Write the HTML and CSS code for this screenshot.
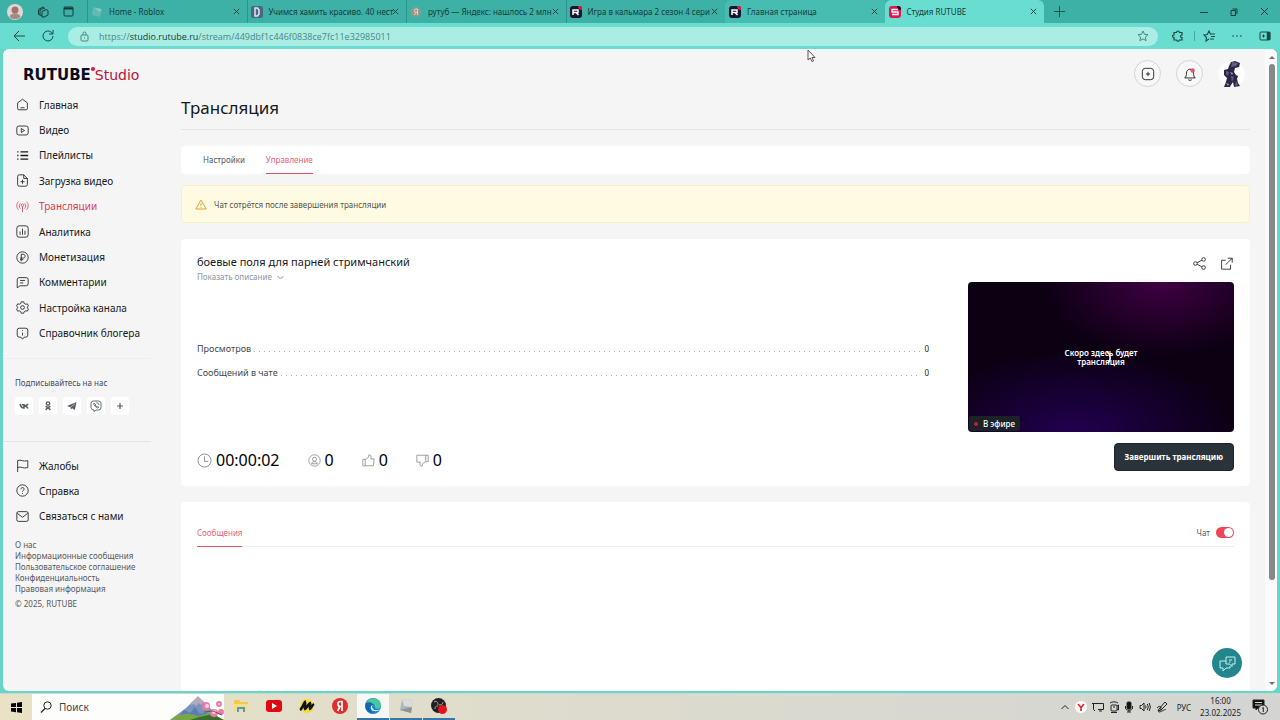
FILE: index.html
```html
<!DOCTYPE html>
<html lang="ru">
<head>
<meta charset="utf-8">
<title>Студия RUTUBE</title>
<link rel="stylesheet" href="styles.css">
</head>
<body>
<svg class="defs" aria-hidden="true">
  <symbol id="close" viewBox="0 0 10 10"><path d="M2 2l6 6M8 2L2 8"/></symbol>
  <symbol id="rutube" viewBox="0 0 12 12"><rect width="12" height="12" rx="3" fill="#141433" stroke="none"/><path d="M8 0h1a3 3 0 0 1 3 3v1A4 4 0 0 1 8 0z" fill="#ed143b" stroke="none"/><path d="M3 9V4h5v2.500H3M6.500 7L8.500 9" stroke="#fff" stroke-width="1.500" fill="none"/></symbol>
</svg>

<header class="tabstrip">
  <div class="tabstrip-tools">
    <button class="plain" aria-label="Профиль"><svg width="16" height="16" viewBox="0 0 16 16"><circle cx="8" cy="8" r="8" fill="#dcd9d4" stroke="none"/><circle cx="8" cy="6" r="3.500" fill="#a3746c" stroke="none"/><path d="M2.500 13c1-5 10-5 11 0a8 8 0 0 1-11 0z" fill="#a98a82" stroke="none"/></svg></button>
    <button class="plain" aria-label="Рабочие области"><svg width="12" height="12" viewBox="0 0 12 12"><path d="M3 9L1.500 8.500v-5L6 1l1 .500M5 10L3 9V4l4-2 1 .500M5 11V5.500l4-2 2 1V9l-4 2z"/></svg></button>
    <button class="plain" aria-label="Меню вкладок"><svg width="11" height="11" viewBox="0 0 11 11"><rect x="1" y="1" width="9" height="9" rx="1"/><path d="M1 2.500h9" stroke-width="2"/></svg></button>
  </div>
  <nav class="tabs" aria-label="Вкладки">
    <div class="tab"><svg width="12" height="12" viewBox="0 0 12 12"><path d="M2 1l9 2-2 8-8-2z" fill="#64b9b2" stroke="none"/><path d="M4 2l6 1-1 3z" fill="#91cec6" stroke="none"/></svg><span>Home - Roblox</span><button class="plain" aria-label="Закрыть"><svg width="9" height="9"><use href="#close"/></svg></button></div>
    <div class="tab"><svg width="12" height="12" viewBox="0 0 12 12"><rect width="12" height="12" rx="2" fill="#4a6788" stroke="none"/><path d="M4 2h2.500L8 4v4L6.500 10H4z" stroke="#dce8ed" fill="none" stroke-width="1.500"/></svg><span>Учимся хамить красиво. 40 нест</span><button class="plain" aria-label="Закрыть"><svg width="9" height="9"><use href="#close"/></svg></button></div>
    <div class="tab"><svg width="12" height="12" viewBox="0 0 12 12"><circle cx="6" cy="6" r="5" fill="#8f9c8c" stroke="none"/><path d="M7.500 9V3H6a1.500 1.500 0 0 0 0 3.300h1.500M6 6.300L4.300 9" stroke="#e8cfc7" fill="none"/></svg><span>рутуб — Яндекс: нашлось 2 млн</span><button class="plain" aria-label="Закрыть"><svg width="9" height="9"><use href="#close"/></svg></button></div>
    <div class="tab"><svg width="12" height="12"><use href="#rutube"/></svg><span>Игра в кальмара 2 сезон 4 сери</span><button class="plain" aria-label="Закрыть"><svg width="9" height="9"><use href="#close"/></svg></button></div>
    <div class="tab tab-light"><svg width="12" height="12"><use href="#rutube"/></svg><span>Главная страница</span><button class="plain" aria-label="Закрыть"><svg width="9" height="9"><use href="#close"/></svg></button></div>
    <div class="tab tab-active"><svg width="12" height="12" viewBox="0 0 12 12"><rect width="12" height="12" rx="3" fill="#df174b" stroke="none"/><path d="M8 0h1a3 3 0 0 1 3 3v1A4 4 0 0 1 8 0z" fill="#141433" stroke="none"/><path d="M9 3.500H3V6h6v2.500H3" stroke="#fff" stroke-width="1.300" fill="none"/></svg><span>Студия RUTUBE</span><button class="plain" aria-label="Закрыть"><svg width="9" height="9"><use href="#close"/></svg></button></div>
  </nav>
  <button class="plain new-tab" aria-label="Новая вкладка"><svg width="11" height="11" viewBox="0 0 11 11"><path d="M5.500 0v11M0 5.500h11" stroke-width=".8"/></svg></button>
  <div class="window-buttons">
    <button class="plain" aria-label="Свернуть"><svg width="8" height="8" viewBox="0 0 8 8"><path d="M0 4.500h8"/></svg></button>
    <button class="plain" aria-label="Восстановить"><svg width="8" height="8" viewBox="0 0 8 8"><path d="M1 2.500h4.500v5H1zM2.500 1h4.500v5"/></svg></button>
    <button class="plain" aria-label="Закрыть окно"><svg width="9" height="9" viewBox="0 0 9 9"><path d="M1 1l7 7M8 1L1 8"/></svg></button>
  </div>
</header>

<div class="toolbar">
  <button class="plain" aria-label="Назад"><svg width="12" height="12" viewBox="0 0 12 12"><path d="M12 6H1M6 1L1 6l5 5"/></svg></button>
  <button class="plain" aria-label="Обновить"><svg width="12" height="12" viewBox="0 0 12 12"><path d="M11 6a5 5 0 1 1-1.500-3.600L11 4M11 0v4H7"/></svg></button>
  <div class="address">
    <svg width="9" height="11" viewBox="0 0 9 11"><rect x="1" y="4" width="7" height="6" rx="1"/><path d="M3 4V2.500a1.500 1.500 0 0 1 3 0V4M4.500 6.500v1"/></svg>
    <p class="url">https://<b>studio.rutube.ru</b>/stream/449dbf1c446f0838ce7fc11e32985011</p>
    <button class="plain" aria-label="В избранное"><svg width="12" height="12" viewBox="0 0 12 12"><path d="M6 1l1.500 3.300 3.500.400-2.600 2.400.700 3.600L6 8.900l-3.100 1.800.700-3.600L1 4.700l3.500-.400z"/></svg></button>
  </div>
  <div class="toolbar-right">
    <button class="plain" aria-label="Расширения"><svg width="12" height="12" viewBox="0 0 12 12"><path d="M2 2.500h2.500c0-2 3-2 3 0H10v2.500c-2 0-2 2.500 0 2.500V10H7.500c0 1.500-3 1.500-3 0H2V7.500C0 7.500 0 5 2 5z" stroke-width="1.200"/></svg></button>
    <span class="divider"></span>
    <button class="plain" aria-label="Избранное"><svg width="12" height="12" viewBox="0 0 12 12"><path d="M6 9L3 11l.500-3.500L1 5l3.300-.500L6 1l1.400 3H12M8 6.500h4M7 9h4" stroke-width="1.100"/></svg></button>
    <button class="plain" aria-label="Параметры"><svg width="12" height="12" viewBox="0 0 12 12"><path d="M1.500 6h1.200M5.400 6h1.200M9.300 6h1.200" stroke-width="1.400"/></svg></button>
    <button class="plain" aria-label="Боковая панель"><svg width="12" height="10" viewBox="0 0 12 10"><rect x="1" y="1" width="10" height="8" rx="1"/><path d="M9.500 1v8" stroke-width="3.500"/><path d="M3 5h3M4.500 3.500v3"/></svg></button>
  </div>
</div>

<div class="frame">
  <div class="page">
    <aside class="sidebar">
      <a class="logo" href="#" aria-label="RUTUBE Studio"><b>RUTUBE</b><i></i><span>Studio</span></a>
      <nav class="menu" aria-label="Разделы">
        <a href="#"><svg width="13" height="13" viewBox="0 0 16 16"><path d="M2 6l6-4.500L14 6v7a1.500 1.500 0 0 1-1.500 1.500h-9A1.500 1.500 0 0 1 2 13zM5.500 12h5"/></svg>Главная</a>
        <a href="#"><svg width="13" height="13" viewBox="0 0 16 16"><rect x="1" y="2.500" width="14" height="11" rx="2.500"/><path d="M6.500 5.500l4 2.500-4 2.500z"/></svg>Видео</a>
        <a href="#"><svg width="13" height="13" viewBox="0 0 16 16"><path d="M5.500 3.500H15M5.500 8H15M5.500 12.500H15M1.500 3.500h1.500M1.500 8h1.500M1.500 12.500h1.500" stroke-width="1.700"/></svg>Плейлисты</a>
        <a href="#"><svg width="13" height="13" viewBox="0 0 16 16"><path d="M9.500 1H4a2 2 0 0 0-2 2v10a2 2 0 0 0 2 2h8a2 2 0 0 0 2-2V5.500zM9.500 1v4.500H14M8 7v5M5.500 9.500h5"/></svg>Загрузка видео</a>
        <a href="#" class="current"><svg width="13" height="13" viewBox="0 0 16 16"><path d="M3 2C.300 5 .300 9 3 12M13 2c2.700 3 2.700 7 0 10M5.500 4c-2 2-2 4.500 0 6.500M10.500 4c2 2 2 4.500 0 6.500M8 8v7"/><circle cx="8" cy="6.500" r="1.500"/></svg>Трансляции</a>
        <a href="#"><svg width="13" height="13" viewBox="0 0 16 16"><rect x="1" y="1" width="14" height="14" rx="3"/><path d="M5 8v4M8 4.500V12M11 7v5"/></svg>Аналитика</a>
        <a href="#"><svg width="13" height="13" viewBox="0 0 16 16"><circle cx="8" cy="8" r="7"/><path d="M6.500 12.500V4h2.300c3.200 0 3.200 4.700 0 4.700H5M5 10.700h4"/></svg>Монетизация</a>
        <a href="#"><svg width="13" height="13" viewBox="0 0 16 16"><path d="M3.500 2h9A2.500 2.500 0 0 1 15 4.500v5A2.500 2.500 0 0 1 12.500 12H5l-3.500 2.500v-10A2.500 2.500 0 0 1 3.500 2zM5 5.500h6M5 8.500h4"/></svg>Комментарии</a>
        <a href="#"><svg width="13" height="13" viewBox="0 0 16 16"><path d="M6.500 1h3l.600 2 1.900 1 2-.500 1.300 2.500L14 7.500v1l1.300 1.500-1.300 2.500-2-.500-1.900 1-.600 2h-3l-.600-2-1.900-1-2 .500L.700 10 2 8.500v-1L.700 6 2 3.500 4 4l1.900-1z"/><circle cx="8" cy="8" r="2.300"/></svg>Настройка канала</a>
        <a href="#"><svg width="13" height="13" viewBox="0 0 16 16"><path d="M4 1.500h8A2.500 2.500 0 0 1 14.500 4v6a2.500 2.500 0 0 1-2.500 2.500h-2L8 15l-2-2.500H4A2.500 2.500 0 0 1 1.500 10V4A2.500 2.500 0 0 1 4 1.500zM8 7v3.500M8 4v1"/></svg>Справочник блогера</a>
      </nav>
      <section class="social">
        <h2>Подписывайтесь на нас</h2>
        <div class="social-row">
          <a href="#" aria-label="VK"><svg width="10" height="10" viewBox="0 0 10 10"><path d="M1 3c.700 2.700 2 4 4 4V3M9 3C8 4.500 7 5 5.200 5 7 5 8.300 6 9 7.500M3.600 3v1.500" stroke-width="1.500"/></svg></a>
          <a href="#" aria-label="Одноклассники"><svg width="10" height="10" viewBox="0 0 10 10"><circle cx="5" cy="2.500" r="1.700" stroke-width="1.300"/><path d="M2.500 5.300c1.500 1.200 3.500 1.200 5 0M5 6.200L2.700 9M5 6.200L7.300 9" stroke-width="1.400"/></svg></a>
          <a href="#" aria-label="Telegram"><svg width="10" height="10" viewBox="0 0 10 10"><path d="M0 5l9.500-4-1.700 8-2.600-1.800L3.800 8.500 3.500 6.300z" fill="#555b62" stroke="none"/><path d="M3.700 6.300L8 2.700" stroke="#fff" stroke-width=".6"/></svg></a>
          <a href="#" aria-label="Viber"><svg width="12" height="12" viewBox="0 0 12 12"><path d="M3.500 1h5A2.500 2.500 0 0 1 11 3.500v4A2.500 2.500 0 0 1 8.500 10H6l-2 1.500V10A2.800 2.800 0 0 1 1 7.500v-4A2.500 2.500 0 0 1 3.500 1zM4 3c-1 1.500 2 5 4 5l.700-1-1.400-.800-.500.500C6 6.500 5.300 5.500 5 5l.500-.700zM6.500 2.700c1.400 0 2.300 1 2.300 2.300" stroke-width=".9"/></svg></a>
          <a href="#" aria-label="Ещё"><svg width="8" height="8" viewBox="0 0 8 8"><path d="M4 1v6M1 4h6" stroke-width="1.200"/></svg></a>
        </div>
      </section>
      <nav class="menu menu-help" aria-label="Помощь">
        <a href="#"><svg width="13" height="13" viewBox="0 0 16 16"><path d="M2 16V2c4-2 7 2 12.500 0v8.500C9 12.500 6 8.500 2 10.500"/></svg>Жалобы</a>
        <a href="#"><svg width="13" height="13" viewBox="0 0 16 16"><circle cx="8" cy="8" r="7"/><path d="M6 6.500c0-3 4.500-2.500 4 0C9.700 7.800 8 7.800 8 9.500M8 11v1.200"/></svg>Справка</a>
        <a href="#"><svg width="13" height="13" viewBox="0 0 16 16"><rect x="1" y="2" width="14" height="12" rx="2"/><path d="M1.500 4L8 9l6.500-5"/></svg>Связаться с нами</a>
      </nav>
      <footer class="legal">
        <a href="#">О нас</a>
        <a href="#">Информационные сообщения</a>
        <a href="#">Пользовательское соглашение</a>
        <a href="#">Конфиденциальность</a>
        <a href="#">Правовая информация</a>
        <p>© 2025, RUTUBE</p>
      </footer>
    </aside>

    <main class="content">
      <div class="topbar">
        <button class="round" aria-label="Создать"><svg width="14" height="14" viewBox="0 0 16 16"><rect x="1.500" y="1.500" width="13" height="13" rx="3.500"/><path d="M8 5.500v5M5.500 8h5"/></svg></button>
        <button class="round" aria-label="Уведомления"><svg width="14" height="14" viewBox="0 0 16 16"><path d="M2 12.500c1.500-1.500 2-3 2-5.500 0-6 8-6 8 0 0 2.500.500 4 2 5.500zM6 14.500c1 1 3 1 4 0"/><circle cx="11" cy="4" r="2.500" fill="#ee5265" stroke="none"/></svg></button>
        <button class="round avatar" aria-label="Аккаунт"><svg width="26" height="26" viewBox="0 0 26 26"><circle cx="13" cy="13" r="13" fill="#fdfdfd" stroke="none"/><g stroke="none"><path d="M12 1l4-1 5 2-1 4-4 1-1 4 2 3 2 1-1 3 1 4 2 3-6 1-1-5-2 3-1 2H5l2-5 1-4-3-3V9l4-1 1-3z" fill="#2b2748"/><path d="M13 1l6 1-2 3-5 1zM7 10l3 1-1 4-2-2zM12 15l3 1-2 5zM17 20l2 4-3 1z" fill="#605d83"/><path d="M11 11l3 1-1 2zM7 22l3 1-1 2z" fill="#a2a0ba"/></g></svg></button>
      </div>
      <h1>Трансляция</h1>
      <nav class="panel section-tabs" aria-label="Трансляция">
        <a href="#">Настройки</a>
        <a href="#" class="current">Управление</a>
      </nav>
      <p class="notice"><svg width="12" height="11" viewBox="0 0 12 11"><path d="M6 1L.800 10h10.400zM6 4v3M6 8v1"/></svg>Чат сотрётся после завершения трансляции</p>

      <section class="panel stream">
        <div class="info">
          <h2>боевые поля для парней стримчанский</h2>
          <button class="plain more">Показать описание<svg width="7" height="5" viewBox="0 0 7 5"><path d="M.500 1l3 3 3-3"/></svg></button>
          <dl class="stats">
            <div><dt>Просмотров</dt><dd>0</dd></div>
            <div><dt>Сообщений в чате</dt><dd>0</dd></div>
          </dl>
          <ul class="counters">
            <li><svg width="15" height="15" viewBox="0 0 16 16"><circle cx="8" cy="8" r="7"/><path d="M8 3.500V9h4"/></svg>00:00:02</li>
            <li><svg width="13" height="13" viewBox="0 0 16 16"><circle cx="8" cy="8" r="7"/><circle cx="8" cy="6.500" r="2.500"/><path d="M4.500 12c0-3.500 7-3.500 7 0z"/></svg>0</li>
            <li><svg width="13" height="13" viewBox="0 0 16 16"><path d="M1 6.500h3v8H1zM4 7l4-3 .500-3c3 0 3 2 2.300 5H15l-1 8.500H4"/></svg>0</li>
            <li><svg width="13" height="13" viewBox="0 0 16 16"><path d="M15 1.500h-3v8h3zM12 9l-4 3-.500 3c-3 0-3-2-2.300-5H1V1.500h11"/></svg>0</li>
          </ul>
        </div>
        <div class="preview">
          <div class="preview-actions">
            <button class="plain" aria-label="Поделиться"><svg width="13" height="13" viewBox="0 0 16 16"><circle cx="3" cy="8" r="2.200"/><circle cx="13" cy="3" r="2.200"/><circle cx="13" cy="13" r="2.200"/><path d="M5 7l6-3M5 9l6 3"/></svg></button>
            <button class="plain" aria-label="Открыть"><svg width="13" height="13" viewBox="0 0 16 16"><path d="M7 4H2v11h11V9.500M9.500 1.500H15V7M15 1.500L7 9.500"/></svg></button>
          </div>
          <div class="video">
            <p>Скоро здесь будет трансляция</p>
            <svg class="spinner" width="6" height="14" viewBox="0 0 6 14"><path d="M1 1c4 2 4 9 1 11" stroke="#fff" stroke-width="1.500"/></svg>
            <span class="live">В эфире</span>
          </div>
          <button class="finish">Завершить трансляцию</button>
        </div>
      </section>

      <section class="panel chat">
        <div class="chat-head">
          <a href="#" class="current">Сообщения</a>
          <label>Чат<input type="checkbox" role="switch" checked></label>
        </div>
      </section>
    </main>
    <div class="scrollbar"><i class="up"></i><span></span><i class="down"></i></div>
    <button class="help" aria-label="Помощь"><svg width="17" height="17" viewBox="0 0 17 17"><path d="M7 2h9v7h-3v2.500L10.500 9H7zM7 6H1v7h3v3l3-3h4v-2"/><path d="M10 5h3M10 7h1.500"/></svg></button>
  </div>
</div>

<footer class="taskbar">
  <button class="plain start" aria-label="Пуск"><svg width="11" height="11" viewBox="0 0 11 11"><path d="M0 1.500L5 1v4H0zM6 .800L11 0v5H6zM0 6h5v4.200L0 9.600zM6 6h5v5l-5-.700z" fill="#000" stroke="none"/></svg></button>
  <label class="search"><svg width="12" height="12" viewBox="0 0 12 12"><circle cx="7.500" cy="4.500" r="3.700"/><path d="M5 7.500L1 11.500" stroke-width="1.300"/></svg><input type="text" placeholder="Поиск" aria-label="Поиск">
    <svg width="54" height="25" viewBox="0 0 54 25"><g stroke="none"><path d="M0 25L16 13l6-6 6-5 5 4 13 13v6z" fill="#7b93bd"/><path d="M22 7l6-6 6 6-3 3-2-2-3 3-2-2-4 1z" fill="#b6a9bd"/><path d="M14 15l6 3 5-6 5 7 8-2-7 8H6z" fill="#5c7db3"/><path d="M0 25c9-7 18-8 28-4l11-3 15 7z" fill="#78a846"/><path d="M20 25l9-3 14-3 11 6z" fill="#39702e"/><g fill="#e77ca8"><circle cx="36" cy="11" r="4"/><circle cx="44" cy="18" r="4"/><circle cx="49" cy="9" r="3"/><circle cx="51" cy="17" r="3"/></g><g fill="#ffd5e2"><circle cx="37" cy="11" r="2"/><circle cx="44" cy="17" r="2"/><circle cx="49" cy="9" r="1"/></g></g><path d="M34 17l9-1 9 4" stroke="#765050"/></svg>
  </label>
  <div class="apps">
    <button class="plain" aria-label="Проводник"><svg width="16" height="16" viewBox="0 0 16 16"><path d="M1 2h5l2 2h7v9H1z" fill="#f4c84a" stroke="none"/><path d="M1 6h14v7H1z" fill="#f9dd82" stroke="none"/><path d="M4 14V9h8v5h-2v-3H6v3z" fill="#4b9dc3" stroke="none"/></svg></button>
    <button class="plain" aria-label="YouTube"><svg width="16" height="16" viewBox="0 0 16 16"><rect y="2" width="16" height="12" rx="3" fill="#e30613" stroke="none"/><path d="M6 5l5 3-5 3z" fill="#fff" stroke="none"/></svg></button>
    <button class="plain" aria-label="Музыка"><svg width="16" height="16" viewBox="0 0 16 16"><circle cx="8" cy="8" r="7" fill="#f4df31" stroke="none"/><path d="M1 12c2-1 4-7 5-8 1 2-1 6 0 7 2-1 3-5 5-6 1 1-1 5 0 6 1 0 2-4 4-5" stroke="#111" stroke-width="2.500"/></svg></button>
    <button class="plain" aria-label="Яндекс"><svg width="16" height="16" viewBox="0 0 16 16"><circle cx="8" cy="8" r="8" fill="#df2d2d" stroke="none"/><path d="M10 13V3.500H8.500c-3.500 0-3.500 5 0 5H10M8 8.500L5.500 13" stroke="#fff" stroke-width="1.700"/></svg></button>
    <button class="plain open focused" aria-label="Edge"><svg width="16" height="16" viewBox="0 0 16 16"><circle cx="8" cy="8" r="8" fill="#1684cf" stroke="none"/><path d="M1 6c2-8 14-7 15 1 0 5-5 4-6 3 1-4-4-6-9-4z" fill="#4bc79e" stroke="none"/><path d="M7 8c0 5 5 5 8 3-2 3-7 3-9 0-1-2 0-4 2-4z" fill="#fff" stroke="none"/><path d="M1 5c4-2 7 0 7 2-3 0-4 4 0 8-5 0-9-4-7-10z" fill="#1266b4" stroke="none"/></svg></button>
    <button class="plain open" aria-label="Roblox"><svg width="16" height="16" viewBox="0 0 16 16"><path d="M4 1l11 2-2 12-11-3z" fill="#b3b6b9" stroke="none"/><path d="M4 1l11 2-1 6-8-1z" fill="#dadddf" stroke="none"/><path d="M2 12l11 3 1-6z" fill="#8e9398" stroke="none"/></svg></button>
    <button class="plain open" aria-label="OBS"><svg width="16" height="16" viewBox="0 0 16 16"><circle cx="7.500" cy="7.500" r="7.500" fill="#211f24" stroke="none"/><path d="M3 4c3-2 4 1 4 3M12 4c0 3-3 3-4 3M4 11c0-3 2-3 3-3" stroke="#aaa"/><circle cx="11.500" cy="11.500" r="4.500" fill="#e31320" stroke="none"/></svg></button>
  </div>
  <div class="tray">
    <svg width="10" height="10" viewBox="0 0 10 10"><path d="M1.500 7L5 3.500 8.500 7"/></svg>
    <svg width="12" height="12" viewBox="0 0 12 12"><circle cx="6" cy="6" r="6" fill="#fff" stroke="none"/><path d="M3 3l3 3.500L9 3M6 6v4" stroke="#dc2626" stroke-width="1.600"/></svg>
    <svg width="12" height="12" viewBox="0 0 12 12"><path d="M3 2.500h8.500v6H6M0 2.500h3M1.500 2.500v6L3 10M7 10h3"/></svg>
    <svg width="10" height="12" viewBox="0 0 10 12"><rect x="2" y="4" width="6" height="6" rx="1"/><path d="M1 2c2-1.500 6-1.500 8 0M8 5l1.500-1v5L8 8M2 11.500h6M4 6h2"/></svg>
    <svg width="10" height="12" viewBox="0 0 10 12"><rect x="3" y="1" width="4" height="7" rx="1" fill="#111"/><path d="M1.500 5v2c0 3 7 3 7 0V5M5 9v2M3 11h4"/></svg>
    <svg width="12" height="12" viewBox="0 0 12 12"><path d="M1 4.500h1.500L5 2v8L2.500 7.500H1zM6.500 4.500q1 1.500 0 3M8.300 3q2 3 0 6M10.200 2q2.400 4 0 8"/></svg>
    <svg width="12" height="12" viewBox="0 0 12 12"><path d="M3 8l6-7 2 2-6 6-3 1zM1 7c4-4 5 0 3 2s-2 3 2 1 3-1 4-2"/></svg>
    <span>РУС</span>
    <time>16:00<br>23.02.2025</time>
    <svg width="16" height="16" viewBox="0 0 16 16"><path d="M1 1h11v8H6l-2 2V9H1z" fill="#111"/><path d="M3 3.500h7M3 6h7" stroke="#ddd"/><circle cx="11" cy="10.500" r="4.500" fill="#d5d5d5"/><path d="M10 9.500l1.300-1V13"/></svg>
  </div>
</footer>
<svg class="cursor" width="9" height="14" viewBox="0 0 9 14"><path d="M1 1v10l2.300-2 1.600 3.500 1.600-.700L5 8.500h3z" fill="#fff" stroke="#555"/></svg>
</body>
</html>
```
FILE: styles.css
```css
* { box-sizing: border-box; }
body {
  margin: 0; height: 100vh; overflow: hidden;
  display: flex; flex-direction: column;
  background: #65d6c8; color: #17191d;
  font-family: "Noto Sans", "Open Sans", sans-serif; font-size: 10px;
}
h1, h2, p, dl, dd, ul { margin: 0; padding: 0; }
a { color: inherit; text-decoration: none; }
svg { fill: none; stroke: currentColor; flex: none; display: block; }
button, input { font: inherit; color: inherit; }
.plain { border: 0; padding: 0; background: none; display: flex; align-items: center; justify-content: center; }
.defs { position: absolute; width: 0; height: 0; }

.tabstrip { height: 23px; flex: none; display: flex; background: #3db1a6; color: #143c3a; }
.tabstrip-tools { width: 87px; flex: none; display: flex; align-items: center; gap: 14px; padding-left: 7px; }
.tabs { flex: 0 1 957px; display: flex; min-width: 0; }
.tab {
  flex: 1 1 0; min-width: 0; display: flex; align-items: center; gap: 6px; padding: 0 6px 0 3px;
  border-left: 1px solid #2b958b; font-size: 8px;
}
.tab span { flex: 1; min-width: 0; white-space: nowrap; }
.tab-light { background: #47bdb1; border-color: #47bdb1; border-radius: 6px 0 0 0; }
.tab-active { background: #6addd1; border-color: #6addd1; border-radius: 6px 6px 0 0; }
.new-tab { width: 30px; flex: none; }
.window-buttons { margin-left: auto; display: flex; gap: 22px; align-items: center; padding-right: 11px; }

.toolbar { height: 26px; flex: none; display: flex; align-items: center; gap: 17px; padding: 0 9px 0 13px; background: #6addd1; color: #174b47; }
.address {
  flex: 1; min-width: 0; height: 19px; margin-left: -3px; display: flex; align-items: center; gap: 10px;
  padding: 0 9px 0 12px; border-radius: 10px; background: #aaede4; color: #4d8680;
}
.url { flex: 1; font-size: 9px; font-family: "Open Sans", sans-serif; }
.url b { font-weight: 400; color: #123c39; }
.toolbar-right { display: flex; align-items: center; gap: 16px; margin-left: -3px; }
.divider { width: 1px; height: 10px; margin: 0 -8px 0 -6px; background: #46a89f; }

.frame { flex: 1; min-height: 0; padding: 0 3px 2px; }
.page { height: 100%; position: relative; overflow: hidden; display: flex; border-radius: 6px; background: #f5f5f5; }
.sidebar { width: 162px; flex: none; }
.logo { display: flex; align-items: center; height: 43px; padding: 9px 0 0 20px; font-family: "DejaVu Sans", sans-serif; font-size: 14px; color: #b9143c; }
.logo b { color: #0c0d1c; font-size: 15px; }
.logo i { width: 4px; height: 4px; margin: 0 0 12px; border-radius: 50%; background: #d3153f; }
.menu { display: grid; grid-auto-rows: 1fr; min-height: 254px; }
.menu a { display: flex; align-items: center; gap: 10px; padding-left: 13px; }
.menu .current { color: #dc4254; }
.social { margin: 12px 14px 0 0; padding: 16px 0 0 12px; border-top: 1px solid #eeeeef; }
.social h2 { font-size: 8px; line-height: 16px; font-weight: 400; color: #474a60; }
.social-row { display: flex; gap: 6px; padding: 6px 0 26px; }
.social-row a { width: 18px; height: 18px; display: grid; place-items: center; background: #fff; border-radius: 3px; color: #555b62; }
.menu-help { min-height: 88px; margin-right: 14px; padding-top: 11px; border-top: 1px solid #e4e4e5; }
.legal { display: flex; flex-direction: column; align-items: flex-start; padding: 10px 0 0 12px; font-size: 8px; line-height: 11px; color: #555960; }
.legal p { margin-top: 4px; }

.content { flex: 1; min-width: 0; padding: 11px 15px 0 16px; display: flex; flex-direction: column; }
.topbar { display: flex; justify-content: flex-end; gap: 15px; padding-right: 5px; }
.round { width: 27px; height: 27px; border: 1px solid #d3d3d5; border-radius: 50%; padding: 0; background: #f8f8f8; display: grid; place-items: center; }
.avatar { border: 0; }
h1 { padding: 10px 0; border-bottom: 1px solid #e4e4e4; font-size: 17px; line-height: 22px; font-weight: 400; }
.panel { background: #fff; border-radius: 4px; }
.section-tabs { height: 28px; flex: none; margin-top: 16px; padding-left: 22px; display: flex; gap: 21px; font-size: 8px; color: #50545a; }
.section-tabs a { display: flex; align-items: center; border-bottom: 1px solid transparent; }
.section-tabs .current, .chat .current { color: #e56573; border-color: #dd5262; }
.notice {
  display: flex; align-items: center; gap: 7px; height: 38px; flex: none; margin-top: 11px; padding-left: 13px;
  background: #fffbe2; border: 1px solid #f8efc3; border-radius: 4px; font-size: 8px; color: #55564a;
}
.notice svg { color: #d9a72e; }
.stream { margin-top: 16px; padding: 15px 16px; display: flex; gap: 39px; }
.info { flex: 1; min-width: 0; display: flex; flex-direction: column; align-items: flex-start; }
.info h2 { font-size: 11px; line-height: 16px; font-weight: 400; }
.more { gap: 5px; font-size: 8px; line-height: 14px; color: #8d96a2; }
.stats { width: 100%; margin: 52px 0 auto; font-size: 9px; color: #44484d; }
.stats div { display: flex; align-items: center; height: 24px; gap: 3px; }
.stats div::before { content: ""; order: 1; flex: 1; height: 1px; margin-top: 6px; background: repeating-linear-gradient(to right, #a9acb0 0 1px, transparent 1px 5px); }
.stats dd { order: 2; font-size: 8px; color: #17191d; }
.counters { display: flex; gap: 28px; list-style: none; font-size: 16px; line-height: 22px; color: #000; }
.counters li { display: flex; align-items: center; gap: 4px; }
.counters svg { color: #868b93; }
.preview { width: 266px; flex: none; display: flex; flex-direction: column; }
.preview-actions { display: flex; justify-content: flex-end; gap: 14px; height: 28px; align-items: flex-start; padding: 3px 1px 0 0; }
.video {
  position: relative; aspect-ratio: 266 / 150; border-radius: 4px; overflow: hidden; display: grid; place-items: center;
  color: #fff; font-size: 8px; line-height: 9px; font-weight: 600; text-align: center;
  background: radial-gradient(ellipse 45% 50% at 73% 0, #3f0043, transparent),
    radial-gradient(ellipse 60% 55% at 40% 100%, #21004f, transparent), #0c0013;
}
.video p { width: 82px; }
.spinner { position: absolute; left: 52%; top: 46%; }
.live { position: absolute; left: 1px; bottom: 1px; display: flex; align-items: center; gap: 5px; padding: 2px 5px; background: #1c2226; font-weight: 500; line-height: 11px; border-radius: 2px; }
.live::before { content: ""; width: 4px; height: 4px; border-radius: 50%; background: #c61c3c; }
.finish { align-self: flex-end; height: 28px; margin-top: 11px; padding: 0 10px 2px; border: 1px solid #1d252b; border-radius: 4px; background: #2a333a; color: #fff; font-size: 8px; font-weight: 700; }
.chat { flex: 1; margin-top: 16px; padding: 16px; border-radius: 4px 4px 0 0; }
.chat-head { display: flex; justify-content: space-between; height: 29px; border-bottom: 1px solid #eee; font-size: 8px; color: #5a5d62; }
.chat-head a { display: flex; align-items: center; height: 29px; border-bottom: 1px solid; }
.chat-head label { display: flex; align-items: center; gap: 6px; }
.chat-head input { appearance: none; width: 18px; height: 11px; margin: 0; padding: 1px; border-radius: 6px; background: #ee4656; display: flex; justify-content: flex-end; }
.chat-head input::before { content: ""; width: 9px; height: 9px; border-radius: 50%; background: #fff; }
.scrollbar { width: 12px; flex: none; display: flex; flex-direction: column; align-items: center; padding: 7px 0 6px 2px; background: #fbfbfb; }
.scrollbar span { width: 6px; height: 82%; margin: 5px 0 auto; border-radius: 3px; background: #858987; }
.scrollbar i { border: 3px solid transparent; }
.scrollbar .up { border-bottom-color: #6f7472; border-top: 0; }
.scrollbar .down { border-top-color: #6f7472; border-bottom: 0; }
.help { position: absolute; right: 35px; bottom: 13px; width: 30px; height: 30px; padding: 0; border: 0; border-radius: 50%; background: #23868d; color: #c5f2ee; display: grid; place-items: center; }

.taskbar { height: 27px; flex: none; display: flex; background: linear-gradient(to right, #e9e2c5, #dedccd 40%, #d4d5d3); color: #222; border-top: 1px solid #c5dacd; }
.start { width: 32px; flex: none; }
.search { width: 192px; flex: none; display: flex; align-items: center; gap: 7px; padding-left: 8px; background: #fdfdfb; }
.search input { flex: 1; min-width: 0; border: 0; padding: 0; background: none; font-size: 10px; outline: 0; }
.search input::placeholder { color: #444; opacity: 1; }
.apps { display: flex; gap: 1px; padding-left: 1px; }
.apps .plain { width: 32px; border-bottom: 2px solid transparent; }
.apps .open { border-color: #3577a8; }
.apps .focused { background: #f7f8f5; }
.tray { margin-left: auto; display: flex; align-items: center; gap: 5px; padding-right: 12px; font-size: 8px; }
.tray span { margin: 0 4px; }
.tray time { line-height: 12px; text-align: center; margin-right: 6px; }
.cursor { position: absolute; left: 807px; top: 49px; }
```
